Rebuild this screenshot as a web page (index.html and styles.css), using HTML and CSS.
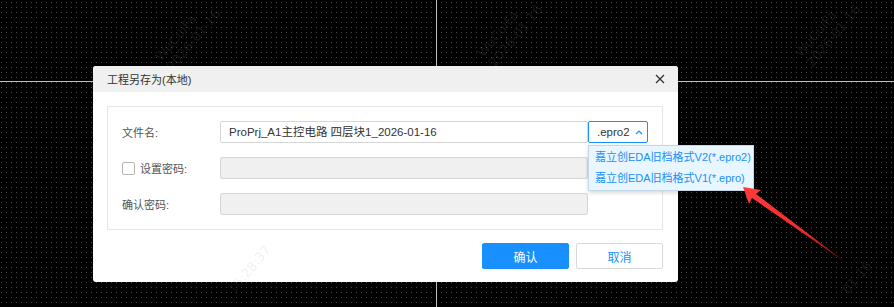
FILE: index.html
```html
<html>

<head>
    <title>
        工程另存为
    </title>
    <link rel="stylesheet" href="styles.css">
</head>

<body>
    <div class="canvas">
        <div class="axis-h"></div>
        <div class="axis-v"></div>

        <div class="mark mark-1">WuCuiFa<br>2026-01-16</div>
        <div class="mark mark-2">WuCuiFa<br>2026-01-16</div>
        <div class="mark mark-3">WuCuiFa<br>2026-01-16</div>

        <div class="dialog">
            <div class="dialog-head">
                <span class="dialog-title">工程另存为(本地)</span>
                <span class="close">
                    <svg width="10" height="10" viewBox="0 0 10 10">
                        <path d="M1 1 L9 9 M9 1 L1 9" stroke="#333" stroke-width="1.3" fill="none" />
                    </svg>
                </span>
            </div>
            <div class="dialog-body">
                <div class="panel">
                    <div class="row">
                        <div class="label">文件名:</div>
                        <div class="input name-input">ProPrj_A1主控电路 四层块1_2026-01-16</div>
                        <div class="select">
                            .epro2
                            <svg width="8" height="6" viewBox="0 0 8 6">
                                <path d="M1 5 L4 2 L7 5" stroke="#1890ff" stroke-width="1.1" fill="none" />
                            </svg>
                        </div>
                    </div>
                    <div class="row">
                        <div class="label"><span class="check"></span>设置密码:</div>
                        <div class="input disabled"></div>
                    </div>
                    <div class="row">
                        <div class="label">确认密码:</div>
                        <div class="input disabled"></div>
                    </div>
                </div>
                <div class="actions">
                    <button class="btn primary">确认</button>
                    <button class="btn">取消</button>
                </div>
            </div>
        </div>

        <div class="mark mark-4">16:28:37</div>
        <div class="mark mark-5">01-16</div>

        <div class="dropdown">
            <div class="option">嘉立创EDA旧档格式V2(*.epro2)</div>
            <div class="option">嘉立创EDA旧档格式V1(*.epro)</div>
        </div>

        <svg class="arrow" width="894" height="307" viewBox="0 0 894 307">
            <defs>
                <linearGradient id="arrowFill" x1="743" y1="187" x2="848" y2="264" gradientUnits="userSpaceOnUse">
                    <stop offset="0" stop-color="#ff3b3b" />
                    <stop offset="0.6" stop-color="#f02a2a" />
                    <stop offset="1" stop-color="#5a0000" />
                </linearGradient>
            </defs>
            <polygon points="743,187 761,190 756,194 848,264 752,198 749,204" fill="url(#arrowFill)" />
        </svg>
    </div>
</body>
</html>
```

FILE: styles.css
```css
body {
    margin: 0;
    font-family: "Liberation Sans", "Noto Sans CJK SC", sans-serif;
    font-size: 11px;
}

.canvas {
    position: relative;
    width: 894px;
    height: 307px;
    overflow: hidden;
    background-color: #000;
    background-image: radial-gradient(circle, #4a4a4a 0.7px, transparent 0.8px);
    background-size: 5px 5px;
    background-position: -1px 0;
}

.axis-h {
    position: absolute;
    left: 0;
    top: 81px;
    width: 894px;
    height: 1px;
    background: #bdbdbd;
}

.axis-v {
    position: absolute;
    left: 436px;
    top: 0;
    width: 1px;
    height: 307px;
    background: #bdbdbd;
}

.mark {
    position: absolute;
    color: rgba(255, 255, 255, 0.1);
    font-family: "DejaVu Sans", sans-serif;
    font-size: 13px;
    line-height: 15px;
    transform: rotate(-50deg);
    white-space: nowrap;
    pointer-events: none;
}

.mark-1 { left: 150px; top: 20px; }
.mark-2 { left: 472px; top: 16px; }
.mark-3 { left: 790px; top: 16px; }
.mark-4 { left: 220px; top: 262px; color: rgba(120, 120, 120, 0.12); }
.mark-5 { left: 838px; top: 270px; }

.dialog {
    position: absolute;
    left: 93px;
    top: 66px;
    width: 585px;
    height: 216px;
    background: #fff;
    border-radius: 3px;
    overflow: hidden;
}

.dialog-head {
    height: 26px;
    background: #f0f0f0;
    display: flex;
    align-items: center;
    justify-content: space-between;
    padding: 0 14px 0 14px;
}

.dialog-title {
    color: #333;
}

.close {
    display: flex;
    align-items: center;
    margin-right: -1px;
}

.dialog-body {
    padding: 14px 15px 0 14px;
}

.panel {
    border: 1px solid #e6e6e6;
    padding: 14px 0 14px 14px;
    display: flex;
    flex-direction: column;
    gap: 14px;
}

.row {
    display: flex;
    align-items: center;
    height: 22px;
}

.label {
    width: 98px;
    color: #555;
    display: flex;
    align-items: center;
}

.check {
    width: 11px;
    height: 11px;
    border: 1px solid #b5b5b5;
    border-radius: 2px;
    margin-right: 5px;
    background: #fff;
}

.input {
    width: 368px;
    height: 22px;
    box-sizing: border-box;
    border: 1px solid #d6d6d6;
    border-radius: 2px;
    padding-left: 8px;
    line-height: 20px;
    color: #333;
    font-size: 11.5px;
}

.disabled {
    background: #f0f0f0;
}

.select {
    width: 60px;
    height: 22px;
    box-sizing: border-box;
    border: 1px solid #1890ff;
    border-radius: 2px;
    display: flex;
    align-items: center;
    gap: 5px;
    padding-left: 8px;
    color: #333;
    font-size: 11.5px;
}

.actions {
    display: flex;
    justify-content: flex-end;
    gap: 7px;
    margin-top: 13px;
}

.btn {
    width: 87px;
    height: 26px;
    box-sizing: border-box;
    border: 1px solid #d9d9d9;
    border-radius: 2px;
    background: #fff;
    color: #1890ff;
    font-family: "Liberation Sans", "Noto Sans CJK SC", sans-serif;
    font-size: 12px;
}

.primary {
    background: #1890ff;
    border-color: #1890ff;
    color: #fff;
}

.dropdown {
    position: absolute;
    left: 588px;
    top: 145px;
    width: 166px;
    box-sizing: border-box;
    background: #e8f6ff;
    border: 1px solid #c4d7e6;
    box-shadow: 0 2px 4px rgba(0, 0, 0, 0.15);
    padding: 1px 0;
}

.option {
    height: 21px;
    line-height: 21px;
    padding-left: 6px;
    color: #1890ff;
    white-space: nowrap;
}

.arrow {
    position: absolute;
    left: 0;
    top: 0;
}
```
